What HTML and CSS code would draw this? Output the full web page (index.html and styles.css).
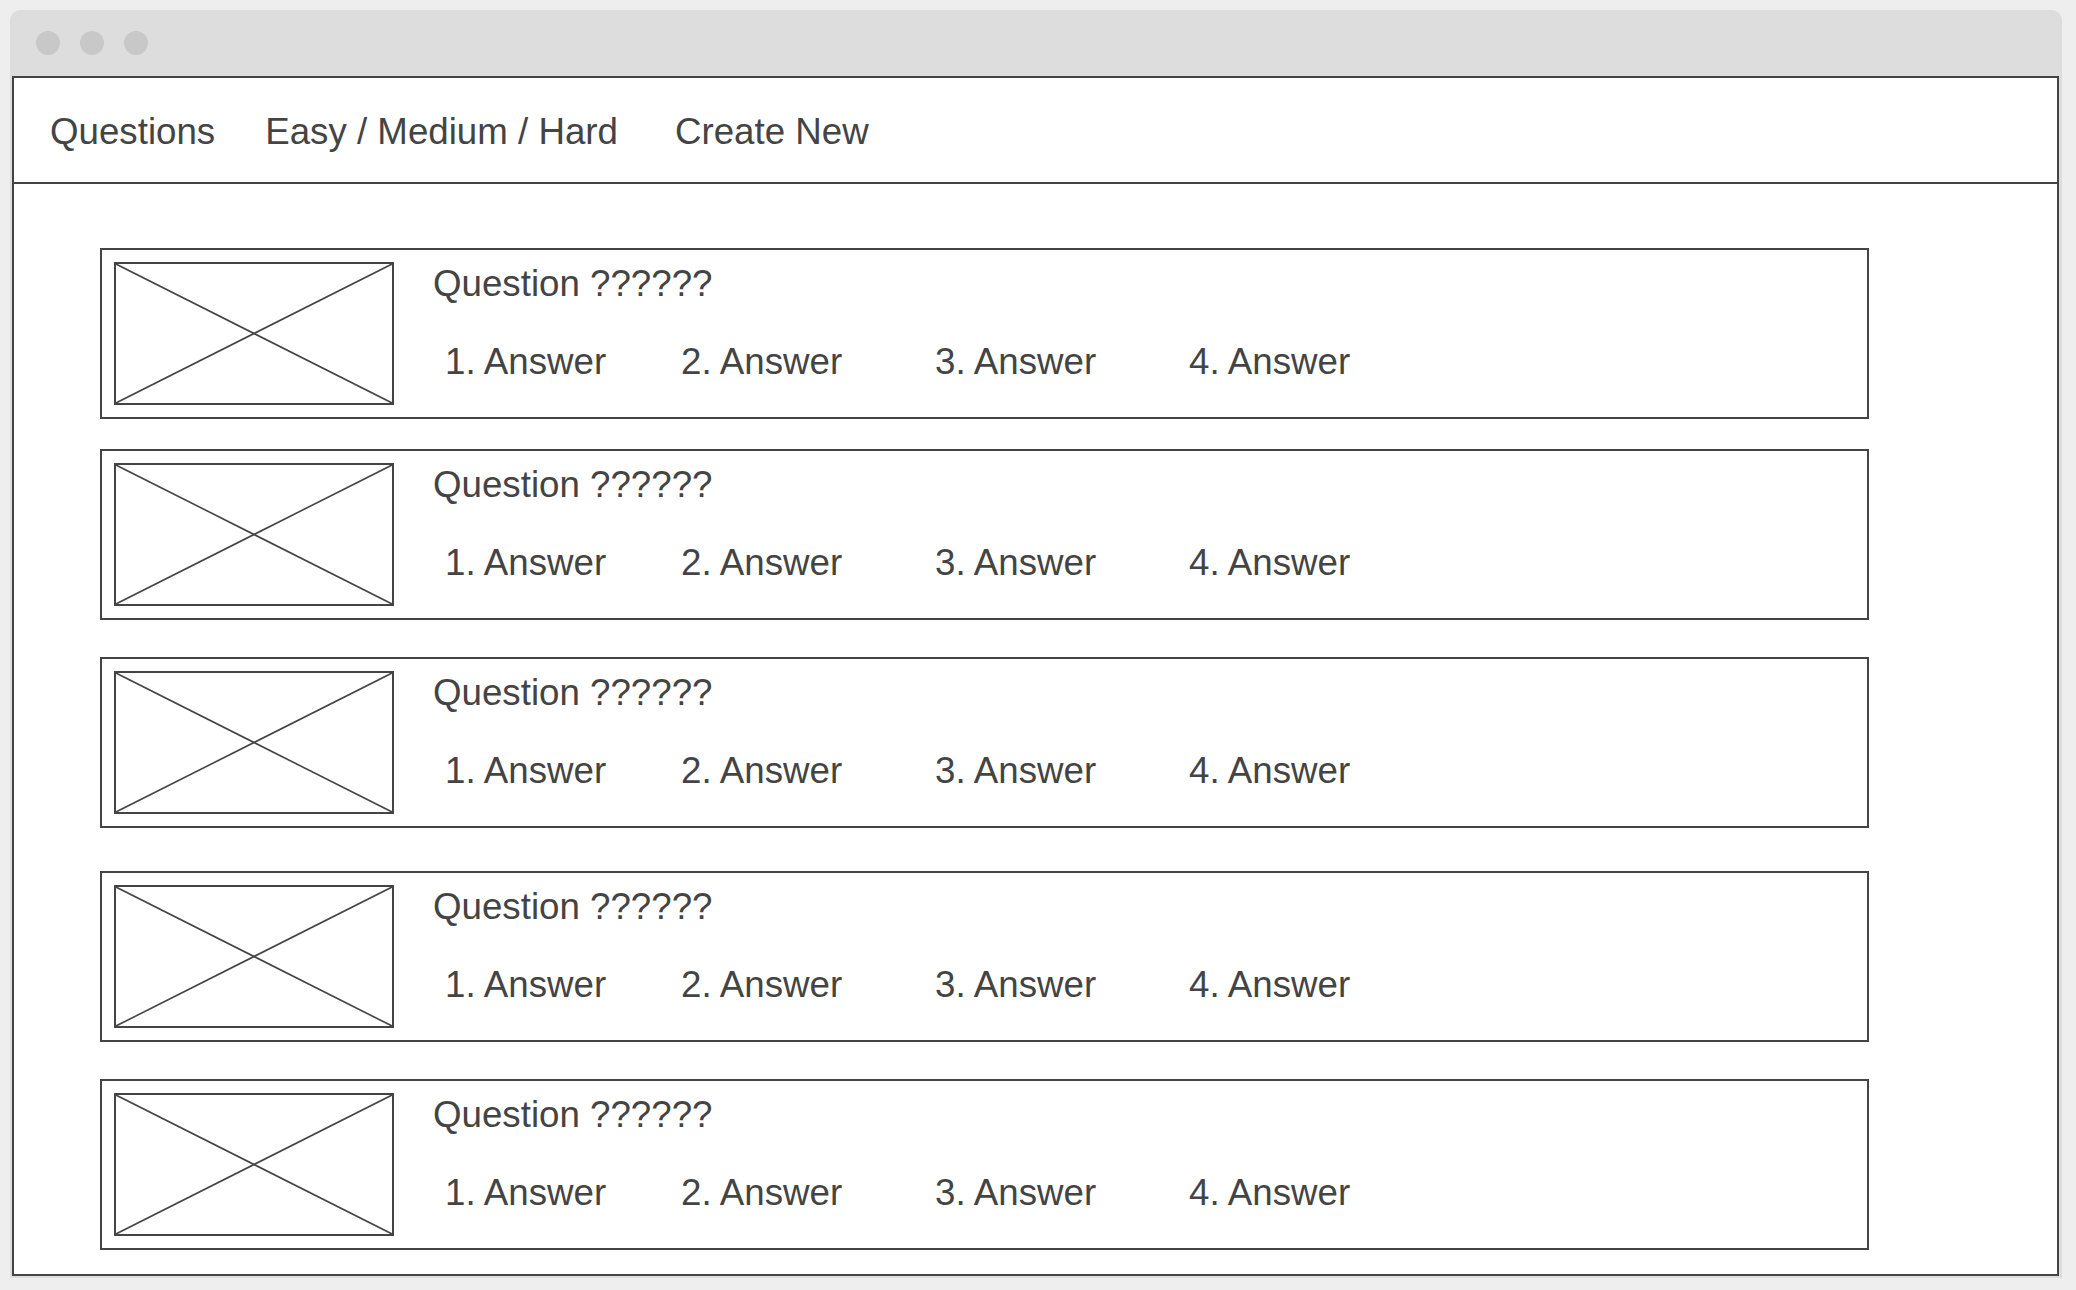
FILE: index.html
```html
<!DOCTYPE html>
<html lang="en">
<head>
<meta charset="utf-8">
<title>Questions</title>
<link rel="stylesheet" href="styles.css">
</head>
<body>
<div class="window">
  <div class="titlebar">
    <span class="dot"></span><span class="dot"></span><span class="dot"></span>
  </div>
  <div class="panel">
    <nav class="nav">
      <a class="nav-item nav-first">Questions</a>
      <a class="nav-item nav-second">Easy / Medium / Hard</a>
      <a class="nav-item nav-third">Create New</a>
    </nav>
    <main class="list">
      <section class="card">
        <svg class="thumb" viewBox="0 0 100 100" preserveAspectRatio="none"><line x1="0" y1="0" x2="100" y2="100" vector-effect="non-scaling-stroke"/><line x1="100" y1="0" x2="0" y2="100" vector-effect="non-scaling-stroke"/></svg>
        <div class="body">
          <div class="question">Question ??????</div>
          <div class="answers"><span>1. Answer</span><span>2. Answer</span><span>3. Answer</span><span>4. Answer</span></div>
        </div>
      </section>
      <section class="card">
        <svg class="thumb" viewBox="0 0 100 100" preserveAspectRatio="none"><line x1="0" y1="0" x2="100" y2="100" vector-effect="non-scaling-stroke"/><line x1="100" y1="0" x2="0" y2="100" vector-effect="non-scaling-stroke"/></svg>
        <div class="body">
          <div class="question">Question ??????</div>
          <div class="answers"><span>1. Answer</span><span>2. Answer</span><span>3. Answer</span><span>4. Answer</span></div>
        </div>
      </section>
      <section class="card">
        <svg class="thumb" viewBox="0 0 100 100" preserveAspectRatio="none"><line x1="0" y1="0" x2="100" y2="100" vector-effect="non-scaling-stroke"/><line x1="100" y1="0" x2="0" y2="100" vector-effect="non-scaling-stroke"/></svg>
        <div class="body">
          <div class="question">Question ??????</div>
          <div class="answers"><span>1. Answer</span><span>2. Answer</span><span>3. Answer</span><span>4. Answer</span></div>
        </div>
      </section>
      <section class="card">
        <svg class="thumb" viewBox="0 0 100 100" preserveAspectRatio="none"><line x1="0" y1="0" x2="100" y2="100" vector-effect="non-scaling-stroke"/><line x1="100" y1="0" x2="0" y2="100" vector-effect="non-scaling-stroke"/></svg>
        <div class="body">
          <div class="question">Question ??????</div>
          <div class="answers"><span>1. Answer</span><span>2. Answer</span><span>3. Answer</span><span>4. Answer</span></div>
        </div>
      </section>
      <section class="card">
        <svg class="thumb" viewBox="0 0 100 100" preserveAspectRatio="none"><line x1="0" y1="0" x2="100" y2="100" vector-effect="non-scaling-stroke"/><line x1="100" y1="0" x2="0" y2="100" vector-effect="non-scaling-stroke"/></svg>
        <div class="body">
          <div class="question">Question ??????</div>
          <div class="answers"><span>1. Answer</span><span>2. Answer</span><span>3. Answer</span><span>4. Answer</span></div>
        </div>
      </section>
    </main>
  </div>
</div>
</body>
</html>
```
FILE: styles.css
```css
* { box-sizing: border-box; }
html, body { height: 100%; }
body {
  margin: 0;
  padding: 10px 14px 12px 10px;
  background: #eeeeee;
  font-family: "Liberation Sans", Arial, sans-serif;
  color: #444444;
  overflow: hidden;
}
.window {
  height: 100%;
  display: flex;
  flex-direction: column;
  background: #dddddd;
  border-radius: 10px 10px 0 0;
  padding: 0 3px 2px 2px;
}
.titlebar {
  height: 66px;
  flex: none;
  display: flex;
  align-items: center;
  gap: 20px;
  padding-left: 24px;
}
.dot {
  width: 24px;
  height: 24px;
  border-radius: 50%;
  background: #c8c8c8;
}
.panel {
  flex: 1;
  background: #ffffff;
  border: 2px solid #444444;
  display: flex;
  flex-direction: column;
}
.nav {
  display: flex;
  align-items: baseline;
  padding: 36px 0 32px 36px;
  border-bottom: 2px solid #444444;
  font-size: 36.7px;
  line-height: 36px;
}
.nav-item { color: #444444; white-space: nowrap; }
.nav-second { margin-left: 50px; }
.nav-third { margin-left: 57px; }
.list {
  padding: 64px 0 0 86px;
  display: flex;
  flex-direction: column;
}
.card {
  width: 1769px;
  height: 171px;
  border: 2px solid #444444;
  padding: 12px;
  display: flex;
}
.card + .card { margin-top: 30px; }
.card:nth-child(3) { margin-top: 37px; }
.card:nth-child(4) { margin-top: 43px; }
.card:nth-child(5) { margin-top: 37px; }
.thumb {
  width: 280px;
  height: 143px;
  flex: none;
  border: 2px solid #444444;
  background: #ffffff;
}
.thumb line { stroke: #444444; stroke-width: 1.6; }
.body {
  margin-left: 39px;
  padding-top: 4px;
  font-size: 36.7px;
  line-height: 36px;
}
.question { white-space: nowrap; }
.answers {
  margin-top: 42px;
  padding-left: 12px;
  display: grid;
  grid-template-columns: 236px 254px 254px auto;
  white-space: nowrap;
}
```
